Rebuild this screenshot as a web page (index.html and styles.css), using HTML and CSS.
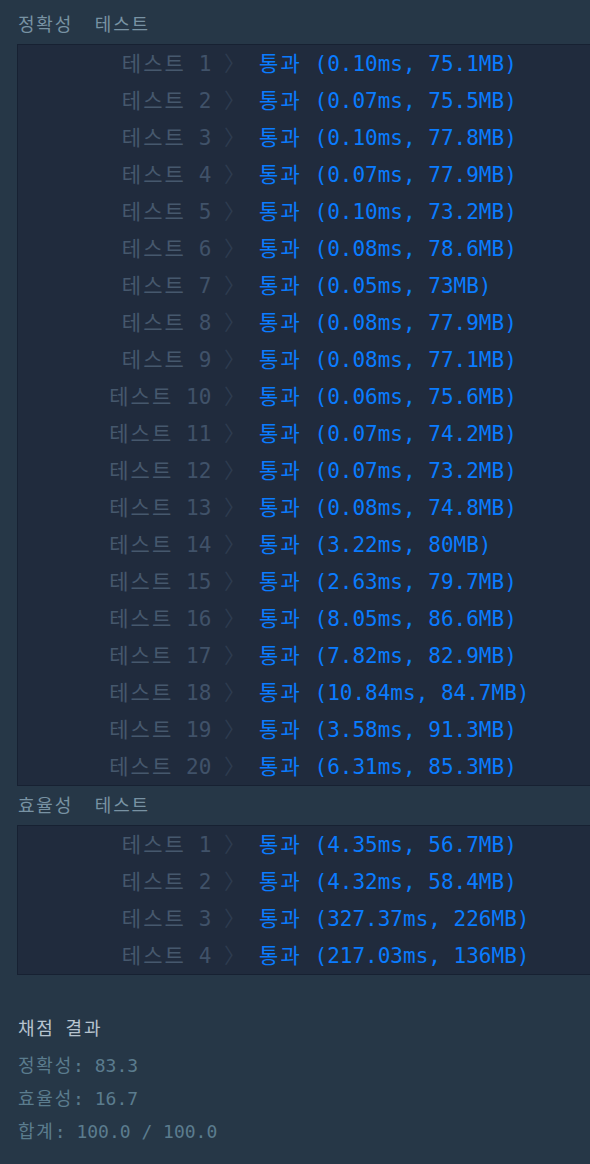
FILE: index.html
```html
<!DOCTYPE html>
<html lang="ko">
<head>
<meta charset="utf-8">
<link rel="stylesheet" href="styles.css">
</head>
<body>
<div class="page">
  <div class="section-title"><span class="ko">정확성</span>&nbsp;&nbsp;<span class="ko">테스트</span></div>
  <div class="box">
    <div class="row"><span class="label"><span class="ko">테스트</span> <span class="num">1</span> <span class="chev">〉</span></span><span class="result"><span class="ko">통과</span> (0.10ms, 75.1MB)</span></div>
    <div class="row"><span class="label"><span class="ko">테스트</span> <span class="num">2</span> <span class="chev">〉</span></span><span class="result"><span class="ko">통과</span> (0.07ms, 75.5MB)</span></div>
    <div class="row"><span class="label"><span class="ko">테스트</span> <span class="num">3</span> <span class="chev">〉</span></span><span class="result"><span class="ko">통과</span> (0.10ms, 77.8MB)</span></div>
    <div class="row"><span class="label"><span class="ko">테스트</span> <span class="num">4</span> <span class="chev">〉</span></span><span class="result"><span class="ko">통과</span> (0.07ms, 77.9MB)</span></div>
    <div class="row"><span class="label"><span class="ko">테스트</span> <span class="num">5</span> <span class="chev">〉</span></span><span class="result"><span class="ko">통과</span> (0.10ms, 73.2MB)</span></div>
    <div class="row"><span class="label"><span class="ko">테스트</span> <span class="num">6</span> <span class="chev">〉</span></span><span class="result"><span class="ko">통과</span> (0.08ms, 78.6MB)</span></div>
    <div class="row"><span class="label"><span class="ko">테스트</span> <span class="num">7</span> <span class="chev">〉</span></span><span class="result"><span class="ko">통과</span> (0.05ms, 73MB)</span></div>
    <div class="row"><span class="label"><span class="ko">테스트</span> <span class="num">8</span> <span class="chev">〉</span></span><span class="result"><span class="ko">통과</span> (0.08ms, 77.9MB)</span></div>
    <div class="row"><span class="label"><span class="ko">테스트</span> <span class="num">9</span> <span class="chev">〉</span></span><span class="result"><span class="ko">통과</span> (0.08ms, 77.1MB)</span></div>
    <div class="row"><span class="label"><span class="ko">테스트</span> <span class="num">10</span> <span class="chev">〉</span></span><span class="result"><span class="ko">통과</span> (0.06ms, 75.6MB)</span></div>
    <div class="row"><span class="label"><span class="ko">테스트</span> <span class="num">11</span> <span class="chev">〉</span></span><span class="result"><span class="ko">통과</span> (0.07ms, 74.2MB)</span></div>
    <div class="row"><span class="label"><span class="ko">테스트</span> <span class="num">12</span> <span class="chev">〉</span></span><span class="result"><span class="ko">통과</span> (0.07ms, 73.2MB)</span></div>
    <div class="row"><span class="label"><span class="ko">테스트</span> <span class="num">13</span> <span class="chev">〉</span></span><span class="result"><span class="ko">통과</span> (0.08ms, 74.8MB)</span></div>
    <div class="row"><span class="label"><span class="ko">테스트</span> <span class="num">14</span> <span class="chev">〉</span></span><span class="result"><span class="ko">통과</span> (3.22ms, 80MB)</span></div>
    <div class="row"><span class="label"><span class="ko">테스트</span> <span class="num">15</span> <span class="chev">〉</span></span><span class="result"><span class="ko">통과</span> (2.63ms, 79.7MB)</span></div>
    <div class="row"><span class="label"><span class="ko">테스트</span> <span class="num">16</span> <span class="chev">〉</span></span><span class="result"><span class="ko">통과</span> (8.05ms, 86.6MB)</span></div>
    <div class="row"><span class="label"><span class="ko">테스트</span> <span class="num">17</span> <span class="chev">〉</span></span><span class="result"><span class="ko">통과</span> (7.82ms, 82.9MB)</span></div>
    <div class="row"><span class="label"><span class="ko">테스트</span> <span class="num">18</span> <span class="chev">〉</span></span><span class="result"><span class="ko">통과</span> (10.84ms, 84.7MB)</span></div>
    <div class="row"><span class="label"><span class="ko">테스트</span> <span class="num">19</span> <span class="chev">〉</span></span><span class="result"><span class="ko">통과</span> (3.58ms, 91.3MB)</span></div>
    <div class="row"><span class="label"><span class="ko">테스트</span> <span class="num">20</span> <span class="chev">〉</span></span><span class="result"><span class="ko">통과</span> (6.31ms, 85.3MB)</span></div>
  </div>
  <div class="section-title"><span class="ko">효율성</span>&nbsp;&nbsp;<span class="ko">테스트</span></div>
  <div class="box">
    <div class="row"><span class="label"><span class="ko">테스트</span> <span class="num">1</span> <span class="chev">〉</span></span><span class="result"><span class="ko">통과</span> (4.35ms, 56.7MB)</span></div>
    <div class="row"><span class="label"><span class="ko">테스트</span> <span class="num">2</span> <span class="chev">〉</span></span><span class="result"><span class="ko">통과</span> (4.32ms, 58.4MB)</span></div>
    <div class="row"><span class="label"><span class="ko">테스트</span> <span class="num">3</span> <span class="chev">〉</span></span><span class="result"><span class="ko">통과</span> (327.37ms, 226MB)</span></div>
    <div class="row"><span class="label"><span class="ko">테스트</span> <span class="num">4</span> <span class="chev">〉</span></span><span class="result"><span class="ko">통과</span> (217.03ms, 136MB)</span></div>
  </div>
  <div class="summary">
    <div class="summary-title"><span class="ko">채점</span> <span class="ko">결과</span></div>
    <div class="summary-line"><span class="ko">정확성</span>: 83.3</div>
    <div class="summary-line"><span class="ko">효율성</span>: 16.7</div>
    <div class="summary-line"><span class="ko">합계</span>: 100.0 / 100.0</div>
  </div>
</div>
</body>
</html>
```

FILE: styles.css
```css
html, body {
  margin: 0;
  padding: 0;
  background: #263747;
  overflow: hidden;
}
body {
  font-family: "DejaVu Sans Mono", "Noto Sans CJK KR", monospace;
}
.page {
  padding: 5px 0 0 17px;
}
.ko {
  letter-spacing: 0.1em;
}
.section-title {
  height: 39px;
  line-height: 40px;
  font-size: 18px;
  color: #7892a3;
  padding-left: 1px;
}
.box {
  width: 640px;
  background: #202b3d;
  border: 1px solid #172132;
}
.row {
  display: flex;
  height: 37px;
  line-height: 38px;
  font-size: 21px;
  white-space: pre;
}
.label {
  width: 227px;
  flex: none;
  text-align: right;
  color: #46586d;
}
.num {
  color: #405269;
}
.chev {
  color: #2e3c50;
}
.result {
  padding-left: 14px;
  color: #0a7cff;
}
.summary {
  padding: 36px 0 0 1px;
}
.summary-title {
  font-size: 18px;
  height: 38px;
  line-height: 36px;
  color: #b6c3cf;
}
.summary-line {
  font-size: 18px;
  height: 33px;
  line-height: 33px;
  color: #5b7c8e;
}
```
